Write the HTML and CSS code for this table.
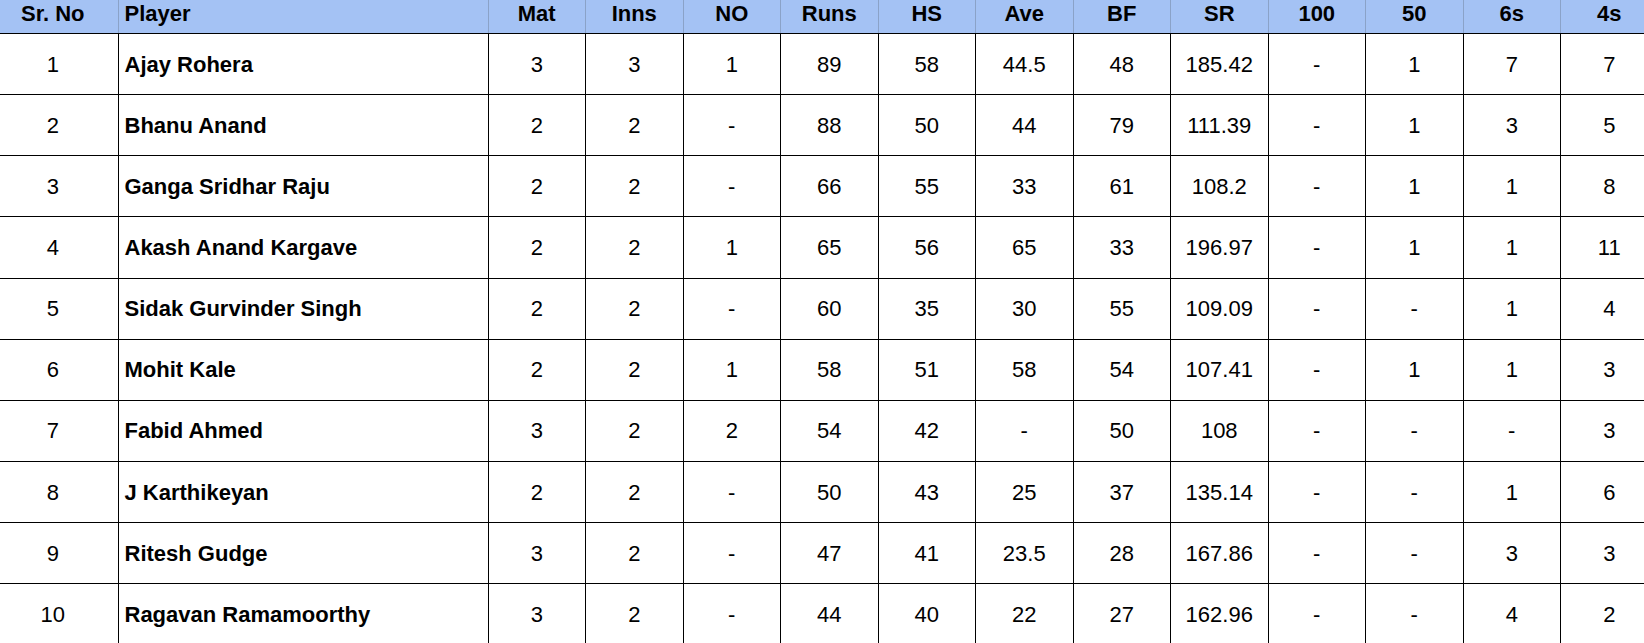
FILE: index.html
```html
<!DOCTYPE html>
<html lang="en">
<head>
<meta charset="utf-8">
<title>Batting stats</title>
<link rel="stylesheet" href="styles.css">
</head>
<body>
<table class="stats">
  <colgroup>
    <col class="c-sr"><col class="c-player">
    <col class="c-num"><col class="c-num"><col class="c-num"><col class="c-num"><col class="c-num"><col class="c-num">
    <col class="c-num"><col class="c-num"><col class="c-num"><col class="c-num"><col class="c-num"><col class="c-num">
  </colgroup>
  <thead>
    <tr>
      <th>Sr. No</th><th class="name">Player</th><th>Mat</th><th>Inns</th><th>NO</th><th>Runs</th><th>HS</th><th>Ave</th><th>BF</th><th>SR</th><th>100</th><th>50</th><th>6s</th><th>4s</th>
    </tr>
  </thead>
  <tbody>
    <tr><td>1</td><td class="name">Ajay Rohera</td><td>3</td><td>3</td><td>1</td><td>89</td><td>58</td><td>44.5</td><td>48</td><td>185.42</td><td>-</td><td>1</td><td>7</td><td>7</td></tr>
    <tr><td>2</td><td class="name">Bhanu Anand</td><td>2</td><td>2</td><td>-</td><td>88</td><td>50</td><td>44</td><td>79</td><td>111.39</td><td>-</td><td>1</td><td>3</td><td>5</td></tr>
    <tr><td>3</td><td class="name">Ganga Sridhar Raju</td><td>2</td><td>2</td><td>-</td><td>66</td><td>55</td><td>33</td><td>61</td><td>108.2</td><td>-</td><td>1</td><td>1</td><td>8</td></tr>
    <tr><td>4</td><td class="name">Akash Anand Kargave</td><td>2</td><td>2</td><td>1</td><td>65</td><td>56</td><td>65</td><td>33</td><td>196.97</td><td>-</td><td>1</td><td>1</td><td>11</td></tr>
    <tr><td>5</td><td class="name">Sidak Gurvinder Singh</td><td>2</td><td>2</td><td>-</td><td>60</td><td>35</td><td>30</td><td>55</td><td>109.09</td><td>-</td><td>-</td><td>1</td><td>4</td></tr>
    <tr><td>6</td><td class="name">Mohit Kale</td><td>2</td><td>2</td><td>1</td><td>58</td><td>51</td><td>58</td><td>54</td><td>107.41</td><td>-</td><td>1</td><td>1</td><td>3</td></tr>
    <tr><td>7</td><td class="name">Fabid Ahmed</td><td>3</td><td>2</td><td>2</td><td>54</td><td>42</td><td>-</td><td>50</td><td>108</td><td>-</td><td>-</td><td>-</td><td>3</td></tr>
    <tr><td>8</td><td class="name">J Karthikeyan</td><td>2</td><td>2</td><td>-</td><td>50</td><td>43</td><td>25</td><td>37</td><td>135.14</td><td>-</td><td>-</td><td>1</td><td>6</td></tr>
    <tr><td>9</td><td class="name">Ritesh Gudge</td><td>3</td><td>2</td><td>-</td><td>47</td><td>41</td><td>23.5</td><td>28</td><td>167.86</td><td>-</td><td>-</td><td>3</td><td>3</td></tr>
    <tr><td>10</td><td class="name">Ragavan Ramamoorthy</td><td>3</td><td>2</td><td>-</td><td>44</td><td>40</td><td>22</td><td>27</td><td>162.96</td><td>-</td><td>-</td><td>4</td><td>2</td></tr>
  </tbody>
</table>
</body>
</html>
```
FILE: styles.css
```css
html, body {
  margin: 0;
  padding: 0;
  overflow: hidden;
  background: #ffffff;
}

body {
  font-family: "Liberation Sans", Arial, sans-serif;
  color: #000000;
}

.stats {
  border-collapse: collapse;
  table-layout: fixed;
  width: 1670px;
  margin-left: -12px;
  font-size: 22px;
}

.c-sr { width: 130px; }
.c-player { width: 370px; }
.c-num { width: 97.5px; }

.stats th,
.stats td {
  padding: 0 6px;
  text-align: center;
  white-space: nowrap;
  overflow: hidden;
}

.stats th {
  background: #a4c2f4;
  font-weight: bold;
  height: 33.5px;
  line-height: 25px;
  padding-top: 0;
  padding-bottom: 6px;
  border-left: 1px solid #8aa2c8;
  border-right: 1px solid #8aa2c8;
  border-bottom: 1px solid #000000;
  box-sizing: border-box;
}

.stats td {
  height: 61.15px;
  line-height: 25px;
  border: 1px solid #000000;
  vertical-align: middle;
  box-sizing: border-box;
}

.stats thead th:first-child,
.stats tbody td:first-child {
  border-left: none;
}

.stats .name {
  text-align: left;
  font-weight: bold;
}
```
